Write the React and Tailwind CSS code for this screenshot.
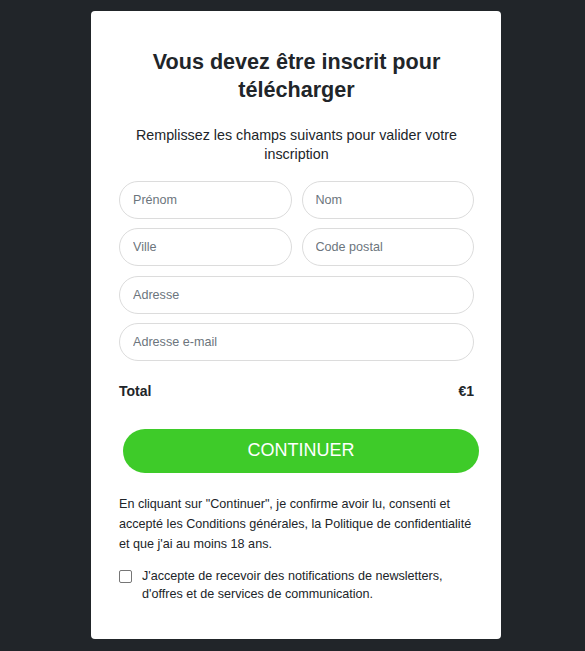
import React from "react";

function Field({ placeholder, className = "" }) {
  return (
    <input
      type="text"
      placeholder={placeholder}
      className={
        "h-[38px] w-full rounded-full border border-[#dcdcdc] bg-white px-[13px] text-[12.6px] text-[#212529] placeholder:text-[#6c757d] outline-none " +
        className
      }
    />
  );
}

export default function App() {
  return (
    <div
      className="min-h-[651px] w-full bg-[#212529] pt-[11px] pl-[91px]"
      style={{ fontFamily: '"Liberation Sans", Arial, sans-serif' }}
    >
      <div className="w-[410px] h-[628px] rounded-[4px] bg-white pl-[28px] pr-[27px] pt-[37px] text-[#212529]">
        <h1 className="text-center text-[21.6px] font-bold leading-[28px]">
          Vous devez être inscrit pour
          <br />
          télécharger
        </h1>
        <p className="mt-[22px] px-[4px] text-center text-[14.3px] leading-[19px]">
          Remplissez les champs suivants pour valider votre inscription
        </p>
        <div className="mt-[17px] flex flex-col gap-[9.3px]">
          <div className="grid grid-cols-2 gap-[10px]">
            <Field placeholder="Prénom" />
            <Field placeholder="Nom" />
          </div>
          <div className="grid grid-cols-2 gap-[10px]">
            <Field placeholder="Ville" />
            <Field placeholder="Code postal" />
          </div>
          <Field placeholder="Adresse" />
          <Field placeholder="Adresse e-mail" />
        </div>
        <div className="mt-[21px] flex justify-between text-[14px] font-bold leading-[18px]">
          <span>Total</span>
          <span>€1</span>
        </div>
        <button className="mt-[29px] ml-[4px] h-[44px] w-[356px] rounded-full bg-[#3ecb29] text-[18px] text-white">
          CONTINUER
        </button>
        <p className="mt-[21px] text-[12.6px] leading-[20px]">
          En cliquant sur "Continuer", je confirme avoir lu, consenti et
          accepté les Conditions générales, la Politique de confidentialité
          et que j'ai au moins 18 ans.
        </p>
        <label className="mt-[13px] flex items-start gap-[10px] text-[12.6px] leading-[18px]">
          <span className="mt-[3px] h-[13px] w-[13px] shrink-0 rounded-[2px] border border-[#767676] bg-white" />
          <span>
            J'accepte de recevoir des notifications de newsletters,
            <br />
            d'offres et de services de communication.
          </span>
        </label>
      </div>
    </div>
  );
}
